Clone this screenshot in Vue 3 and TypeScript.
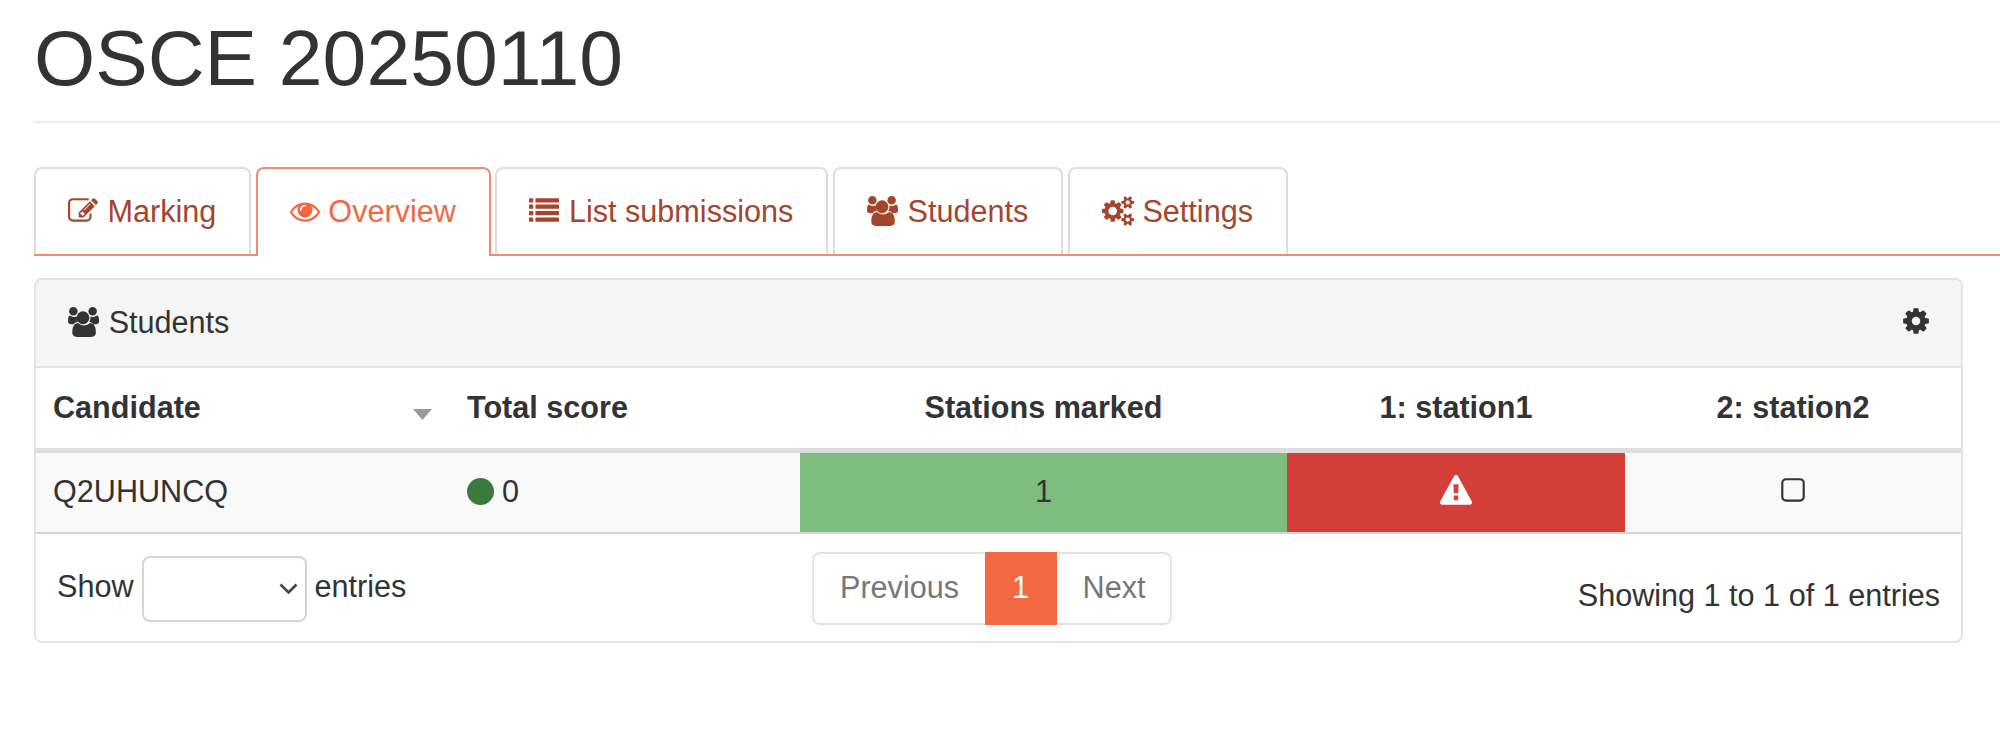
<script setup lang="ts">
interface Icon { d: string; w: number }

const listRows = [128, 512, 896, 1280]
  .map((y) => `M32 ${y}h192q32 0 32 32v192q0 32-32 32H32q-32 0-32-32V${y + 32}q0-32 32-32zM416 ${y}h1344q32 0 32 32v192q0 32-32 32H416q-32 0-32-32V${y + 32}q0-32 32-32z`)
  .join('')

const icons: Record<string, Icon> = {
  edit: { w: 1856, d: 'M888 1184l116-116-152-152-116 116v56h96v96h56zm440-720q-16-16-33 1l-350 350q-17 17-1 33t33-1l350-350q17-17 1-33zm80 594v190q0 119-84.5 203.5t-203.5 84.5h-832q-119 0-203.5-84.5t-84.5-203.5v-832q0-119 84.5-203.5t203.5-84.5h832q63 0 117 25 15 7 18 23 3 17-9 29l-49 49q-14 14-32 8-23-6-45-6h-832q-66 0-113 47t-47 113v832q0 66 47 113t113 47h832q66 0 113-47t47-113v-126q0-13 9-22l64-64q15-15 35-7t20 29zm-96-738l288 288-672 672h-288v-288zm444 132l-92 92-288-288 92-92q28-28 68-28t68 28l152 152q28 28 28 68t-28 68z' },
  eye: { w: 1792, d: 'M1664 960q-152-236-381-353 61 104 61 225 0 185-131.5 316.5t-316.5 131.5-316.5-131.5-131.5-316.5q0-121 61-225-229 117-381 353 133 205 333.5 326.5t434.5 121.5 434.5-121.5 333.5-326.5zm-720-384q0-20-14-34t-34-14q-125 0-214.5 89.5t-89.5 214.5q0 20 14 34t34 14 34-14 14-34q0-86 61-147t147-61q20 0 34-14t14-34zm848 384q0 34-20 69-140 230-376.5 368.5t-499.5 138.5-499.5-139-376.5-368q-20-35-20-69t20-69q140-229 376.5-368t499.5-139 499.5 139 376.5 368q20 35 20 69z' },
  list: { w: 1856, d: listRows },
  users: { w: 1920, d: 'M593 896q-162 5-265 128h-134q-82 0-138-40.5t-56-118.5q0-353 124-353 6 0 43.5 21t97.5 42.5 119 21.5q67 0 133-23-5 37-5 66 0 139 81 256zm1071 637q0 120-73 189.5t-194 69.5h-874q-121 0-194-69.5t-73-189.5q0-53 3.5-103.5t14-109 26.5-108.5 43-97.5 62-81 85.5-53.5 111.5-20q10 0 43 21.5t73 48 107 48 135 21.5 135-21.5 107-48 73-48 43-21.5q61 0 111.5 20t85.5 53.5 62 81 43 97.5 26.5 108.5 14 109 3.5 103.5zm-1088-1277q0 106-75 181t-181 75-181-75-75-181 75-181 181-75 181 75 75 181zm704 384q0 159-112.5 271.5t-271.5 112.5-271.5-112.5-112.5-271.5 112.5-271.5 271.5-112.5 271.5 112.5 112.5 271.5zm576 225q0 78-56 118.5t-138 40.5h-134q-103-123-265-128 81-117 81-256 0-29-5-66 66 23 133 23 59 0 119-21.5t97.5-42.5 43.5-21q124 0 124 353zm-128-609q0 106-75 181t-181 75-181-75-75-181 75-181 181-75 181 75 75 181z' },
  cogs: { w: 1920, d: 'M896 896q0-106-75-181t-181-75-181 75-75 181 75 181 181 75 181-75 75-181zm768 512q0-52-38-90t-90-38-90 38-38 90q0 53 37.5 90.5t90.5 37.5 90.5-37.5 37.5-90.5zm0-1024q0-52-38-90t-90-38-90 38-38 90q0 53 37.5 90.5t90.5 37.5 90.5-37.5 37.5-90.5zm-384 421v185q0 10-7 19.5t-16 10.5l-155 24q-11 35-32 76 34 48 90 115 7 11 7 20 0 12-7 19-23 30-82.5 89.5t-78.5 59.5q-11 0-21-7l-115-90q-37 19-77 31-11 108-23 155-7 24-30 24h-186q-11 0-20-7.5t-10-17.5l-23-153q-34-10-75-31l-118 89q-7 7-20 7-11 0-21-8-144-133-144-160 0-9 7-19 10-14 41-53t47-61q-23-44-35-82l-152-24q-10-1-17-9.5t-7-19.5v-185q0-10 7-19.5t16-10.5l155-24q11-35 32-76-34-48-90-115-7-11-7-20 0-12 7-20 22-30 82-89t79-59q11 0 21 7l115 90q34-18 77-32 11-108 23-154 7-24 30-24h186q11 0 20 7.5t10 17.5l23 153q34 10 75 31l118-89q8-7 20-7 11 0 21 8 144 133 144 160 0 8-7 19-12 16-42 54t-45 60q23 48 34 82l152 23q10 2 17 10.5t7 19.5zm640 533v140q0 16-149 31-12 27-30 52 51 113 51 138 0 4-4 7-122 71-124 71-8 0-46-47t-52-68q-20 2-30 2t-30-2q-14 21-52 68t-46 47q-2 0-124-71-4-3-4-7 0-25 51-138-18-25-30-52-149-15-149-31v-140q0-16 149-31 13-29 30-52-51-113-51-138 0-4 4-7 4-2 35-20t59-34 30-16q8 0 46 46.5t52 67.5q20-2 30-2t30 2q51-71 92-112l6-2q4 0 124 70 4 3 4 7 0 25-51 138 17 23 30 52 149 15 149 31zm0-1024v140q0 16-149 31-12 27-30 52 51 113 51 138 0 4-4 7-122 71-124 71-8 0-46-47t-52-68q-20 2-30 2t-30-2q-14 21-52 68t-46 47q-2 0-124-71-4-3-4-7 0-25 51-138-18-25-30-52-149-15-149-31v-140q0-16 149-31 13-29 30-52-51-113-51-138 0-4 4-7 4-2 35-20t59-34 30-16q8 0 46 46.5t52 67.5q20-2 30-2t30 2q51-71 92-112l6-2q4 0 124 70 4 3 4 7 0 25-51 138 17 23 30 52 149 15 149 31z' },
}

const gear = 'M1152 896q0-106-75-181t-181-75-181 75-75 181 75 181 181 75 181-75 75-181zm512-109v222q0 12-8 23t-20 13l-185 28q-19 54-39 91 35 50 107 138 10 12 10 25t-9 23q-27 37-99 108t-94 71q-12 0-26-9l-138-108q-44 23-91 38-16 136-29 186-7 28-36 28h-222q-14 0-24.5-8.5t-11.5-21.5l-28-184q-49-16-90-37l-141 107q-10 9-25 9-14 0-25-11-126-114-165-168-7-10-7-23 0-12 8-23 15-21 51-66.5t54-70.5q-27-50-41-99l-183-27q-13-2-21-12.5t-8-23.5v-222q0-12 8-23t19-13l186-28q14-46 39-92-40-57-107-138-10-12-10-24 0-10 9-23 26-36 98.5-107.5t94.5-71.5q13 0 26 10l138 107q44-23 91-38 16-136 29-186 7-28 36-28h222q14 0 24.5 8.5t11.5 21.5l28 184q49 16 90 37l142-107q9-9 24-9 13 0 25 10 129 119 165 170 7 8 7 22 0 12-8 23-15 21-51 66.5t-54 70.5q26 50 41 98l183 28q13 2 21 12.5t8 23.5z'
const warning = 'M1024 1375v-190q0-14-9.5-23.5t-22.5-9.5h-192q-13 0-22.5 9.5t-9.5 23.5v190q0 14 9.5 23.5t22.5 9.5h192q13 0 22.5-9.5t9.5-23.5zm-2-374l18-459q0-12-10-19-13-11-24-11h-220q-11 0-24 11-10 7-10 21l17 457q0 10 10 16.5t24 6.5h185q14 0 23.5-6.5t10.5-16.5zm-14-934l768 1408q35 63-2 126-17 29-46.5 46t-63.5 17h-1536q-34 0-63.5-17t-46.5-46q-37-63-2-126l768-1408q17-31 47-49t65-18 65 18 47 49z'
const squareO = 'M1312 256h-832q-66 0-113 47t-47 113v832q0 66 47 113t113 47h832q66 0 113-47t47-113v-832q0-66-47-113t-113-47zm288 160v832q0 119-84.5 203.5t-203.5 84.5h-832q-119 0-203.5-84.5t-84.5-203.5v-832q0-119 84.5-203.5t203.5-84.5h832q119 0 203.5 84.5t84.5 203.5z'

const tabs = [
  { label: 'Marking', icon: 'edit', active: false },
  { label: 'Overview', icon: 'eye', active: true },
  { label: 'List submissions', icon: 'list', active: false },
  { label: 'Students', icon: 'users', active: false },
  { label: 'Settings', icon: 'cogs', active: false },
]
const px = (w: number) => (w * 30) / 1792
</script>

<template>
  <div class="page">
    <h1 class="title">OSCE 20250110</h1>

    <nav class="tabs">
      <a v-for="t in tabs" :key="t.label" class="tab" :class="{ active: t.active }">
        <svg class="fa" :width="px(icons[t.icon].w)" height="30" :viewBox="`0 0 ${icons[t.icon].w} 1792`">
          <path :d="icons[t.icon].d" />
        </svg>
        {{ t.label }}
      </a>
    </nav>

    <section class="panel">
      <header class="panel-head">
        <span>
          <svg class="fa" :width="px(icons.users.w)" height="30" :viewBox="`0 0 ${icons.users.w} 1792`">
            <path :d="icons.users.d" />
          </svg>
          Students
        </span>
        <svg class="gear" width="30" height="30" viewBox="0 0 1792 1792"><path :d="gear" /></svg>
      </header>

      <table class="grid">
        <colgroup>
          <col class="c1" /><col class="c2" /><col class="c3" /><col class="c4" /><col class="c5" />
        </colgroup>
        <thead>
          <tr>
            <th class="sorted">
              Candidate
              <svg class="sort" width="19" height="11" viewBox="0 0 19 11"><path d="M0 0h19L9.5 11z" /></svg>
            </th>
            <th>Total score</th>
            <th class="mid">Stations marked</th>
            <th class="mid">1: station1</th>
            <th class="mid">2: station2</th>
          </tr>
        </thead>
        <tbody>
          <tr>
            <td>Q2UHUNCQ</td>
            <td><span class="dot"></span>0</td>
            <td class="mid ok">1</td>
            <td class="mid bad">
              <svg class="warn" width="32" height="32" viewBox="0 0 1792 1792"><path :d="warning" /></svg>
            </td>
            <td class="mid">
              <svg class="fa" width="30" height="30" viewBox="0 0 1792 1792"><path :d="squareO" /></svg>
            </td>
          </tr>
        </tbody>
      </table>

      <footer class="foot">
        <div class="length">
          <span class="lbl">Show</span>
          <span class="select-wrap">
            <select class="select"></select>
            <svg class="chev" width="19" height="12" viewBox="0 0 19 12"><path d="M1.5 1.5l8 8 8-8" /></svg>
          </span>
          <span class="lbl">entries</span>
        </div>
        <div class="pager">
          <a class="pg prev">Previous</a>
          <a class="pg cur">1</a>
          <a class="pg next">Next</a>
        </div>
        <div class="info">Showing 1 to 1 of 1 entries</div>
      </footer>
    </section>
  </div>
</template>

<style>
body { margin: 0; background: #fff; }
</style>

<style scoped>
.page {
  padding-left: 34px;
  font-family: "Liberation Sans", Arial, sans-serif;
  font-size: 30.6px;
  line-height: 43px;
  color: #333;
}
.title {
  margin: 16px 0 0;
  padding-bottom: 20px;
  border-bottom: 2px solid #eee;
  font-size: 78.7px;
  line-height: 85px;
  font-weight: 400;
}
.fa { fill: currentColor; vertical-align: -4px; overflow: visible; }
.warn { fill: #fff; vertical-align: -5px; }

.tabs {
  display: flex;
  align-items: flex-start;
  gap: 4.5px;
  margin-top: 44px;
  border-bottom: 2px solid #f58a72;
}
.tab {
  padding: 21px 33px 21px 32px;
  border: 2px solid #ddd;
  border-bottom: 0;
  border-radius: 8px 8px 0 0;
  color: #a5452b;
}
.tab.active {
  margin-bottom: -2px;
  padding-bottom: 23px;
  border-color: #f58a72;
  color: #f4683f;
  background: #fff;
}

.panel {
  margin: 22px 37px 0 0;
  border: 2px solid #e3e3e3;
  border-radius: 8px;
}
.panel-head {
  display: flex;
  justify-content: space-between;
  align-items: center;
  padding: 21px 30px 22px 32px;
  background: #f5f5f5;
  border-bottom: 2px solid #e3e3e3;
  border-radius: 6px 6px 0 0;
}
.gear { fill: #333; margin-top: -3px; }

.grid {
  width: 100%;
  table-layout: fixed;
  border-collapse: separate;
  border-spacing: 0;
}
.c1 { width: 414px; }
.c2 { width: 350px; }
.c3 { width: 487px; }
.c4 { width: 338px; }
.c5 { width: 336px; }
.grid th {
  padding: 18px 17px 19px;
  border-bottom: 5px solid #ddd;
  text-align: left;
  font-weight: 700;
}
.grid td {
  padding: 17px 17px 19px;
  border-bottom: 2px solid #d4d4d4;
  background: #f9f9f9;
}
.grid .mid { text-align: center; }
.sorted { position: relative; }
.sort { position: absolute; right: 18px; top: 41px; fill: #999; }
.dot {
  display: inline-block;
  width: 27px;
  height: 27px;
  margin-right: 8px;
  border-radius: 50%;
  background: #3a7a3c;
  vertical-align: -3px;
}
.grid td.ok { background: #7dbd7d; }
.grid td.bad { background: #d43f3a; color: #fff; }

.foot {
  display: grid;
  grid-template-columns: 776px 360px 1fr;
  height: 107px;
}
.length {
  display: flex;
  align-items: center;
  align-self: start;
  gap: 8px;
  margin-top: 22px;
  padding-left: 21px;
}
.lbl { margin-top: -6px; }
.select-wrap { position: relative; display: block; height: 66px; }
.select {
  display: block;
  width: 165px;
  height: 66px;
  appearance: none;
  background: #fff;
  border: 2px solid #d4d4d4;
  border-radius: 8px;
}
.chev {
  position: absolute;
  right: 9px;
  top: 27px;
  fill: none;
  stroke: #444;
  stroke-width: 2.6;
  pointer-events: none;
}
.pager { display: flex; align-self: start; margin-top: 18px; }
.pg {
  padding: 12px 27px 14px;
  border: 2px solid #e3e3e3;
  border-width: 2px 0;
  color: #777;
}
.prev { border-left-width: 2px; border-radius: 8px 0 0 8px; padding-left: 26px; padding-right: 25.5px; }
.next { border-right-width: 2px; border-radius: 0 8px 8px 0; padding-right: 25px; padding-left: 26px; }
.cur { padding-left: 27.5px; padding-right: 27.5px; background: #f46842; border-color: #f46842; color: #fff; }
.info { padding: 40px 21px 0 0; text-align: right; }
</style>
